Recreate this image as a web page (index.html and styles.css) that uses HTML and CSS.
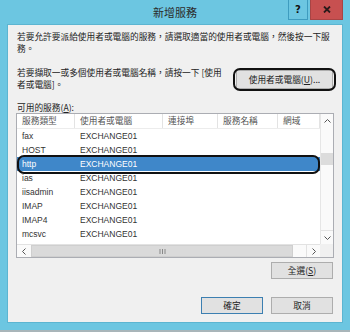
FILE: index.html
```html
<!DOCTYPE html>
<html lang="zh-Hant">
<head>
    <meta charset="UTF-8">
    <title>新增服務</title>
    <link rel="stylesheet" href="styles.css">
</head>
<body>

<div class="window">
    <div class="titlebar">
        <span></span>
        <span class="title">新增服務</span>
        <span class="caption-buttons">
            <span class="cap help">?</span>
            <span class="cap close">
                <svg width="8" height="7" viewBox="0 0 8 7"><path d="M1 0.5 L7 6.5 M7 0.5 L1 6.5" stroke="#2a1a1a" stroke-width="1.8"/></svg>
            </span>
        </span>
    </div>

    <div class="client">
        <p class="intro">若要允許要派給使用者或電腦的服務，請選取適當的使用者或電腦，然後按一下服務。</p>

        <div class="pick-row">
            <p class="pick-text">若要擷取一或多個使用者或電腦名稱，請按一下 [使用者或電腦]。</p>
            <button class="btn btn-users">使用者或電腦(<u>U</u>)...</button>
        </div>

        <div class="label">可用的服務(<u>A</u>):</div>

        <div class="listview">
            <div class="lv-header">
                <span>服務類型</span>
                <span>使用者或電腦</span>
                <span>連接埠</span>
                <span>服務名稱</span>
                <span>網域</span>
            </div>
            <div class="lv-rows">
                <div class="row"><span>fax</span><span>EXCHANGE01</span><span></span><span></span><span></span></div>
                <div class="row"><span>HOST</span><span>EXCHANGE01</span><span></span><span></span><span></span></div>
                <div class="row selected"><span>http</span><span>EXCHANGE01</span><span></span><span></span><span></span></div>
                <div class="row"><span>ias</span><span>EXCHANGE01</span><span></span><span></span><span></span></div>
                <div class="row"><span>iisadmin</span><span>EXCHANGE01</span><span></span><span></span><span></span></div>
                <div class="row"><span>IMAP</span><span>EXCHANGE01</span><span></span><span></span><span></span></div>
                <div class="row"><span>IMAP4</span><span>EXCHANGE01</span><span></span><span></span><span></span></div>
                <div class="row"><span>mcsvc</span><span>EXCHANGE01</span><span></span><span></span><span></span></div>
            </div>
            <div class="vscroll">
                <span class="arrow">
                    <svg width="7" height="4" viewBox="0 0 7 4"><path d="M0.5 3.5 L3.5 0.5 L6.5 3.5" fill="none" stroke="#555" stroke-width="1"/></svg>
                </span>
                <span class="v-gap"></span>
                <span class="v-thumb"></span>
                <span class="v-track"></span>
                <span class="arrow">
                    <svg width="7" height="4" viewBox="0 0 7 4"><path d="M0.5 0.5 L3.5 3.5 L6.5 0.5" fill="none" stroke="#555" stroke-width="1"/></svg>
                </span>
            </div>
            <div class="hscroll">
                <span class="arrow h-arrow">
                    <svg width="4" height="7" viewBox="0 0 4 7"><path d="M3.5 0.5 L0.5 3.5 L3.5 6.5" fill="none" stroke="#555" stroke-width="1"/></svg>
                </span>
                <span class="h-thumb">
                    <svg width="7" height="5" viewBox="0 0 7 5"><path d="M1 0 V5 M3.5 0 V5 M6 0 V5" stroke="#888" stroke-width="1"/></svg>
                </span>
                <span class="h-track"></span>
                <span class="arrow h-arrow">
                    <svg width="4" height="7" viewBox="0 0 4 7"><path d="M0.5 0.5 L3.5 3.5 L0.5 6.5" fill="none" stroke="#555" stroke-width="1"/></svg>
                </span>
            </div>
            <div class="corner"></div>
        </div>

        <div class="select-all-row">
            <button class="btn btn-small">全選(<u>S</u>)</button>
        </div>

        <div class="dialog-buttons">
            <button class="btn btn-small btn-default">確定</button>
            <button class="btn btn-small">取消</button>
        </div>
    </div>
</div>

</body>
</html>
```

FILE: styles.css
```css
body {
    margin: 0;
    background: #a9b5b9;
    font-family: "Noto Sans CJK TC", sans-serif;
}
p {
    margin: 0;
}
.window {
    width: 350px;
    height: 330px;
    box-sizing: border-box;
    background: #6cc6e1;
    padding: 0 7px 7px;
    display: flex;
    flex-direction: column;
}

/* title bar */
.titlebar {
    height: 24px;
    flex: none;
    display: grid;
    grid-template-columns: 1fr auto 1fr;
}
.title {
    font-size: 11px;
    line-height: 22px;
    padding-top: 1px;
    color: #2b2b2b;
}
.caption-buttons {
    justify-self: end;
    display: flex;
    gap: 2px;
    height: 20px;
}
.cap {
    display: flex;
    align-items: center;
    justify-content: center;
    box-sizing: border-box;
    height: 20px;
}
.help {
    width: 20px;
    border: 1px solid #3e9cbf;
    border-top: 0;
    font-family: "DejaVu Sans", sans-serif;
    font-weight: bold;
    font-size: 10px;
    color: #111;
}
.close {
    width: 33px;
    background: #c75050;
    border: 1px solid #a84444;
    border-top: 0;
}

/* dialog body */
.client {
    flex: 1;
    box-sizing: border-box;
    background: #f0f0f0;
    border: 1px solid #5cb5d1;
    padding: 0 8px;
    font-size: 8.7px;
    color: #222;
}
.intro {
    margin: 6px 0 0 1px;
    width: 318px;
    line-height: 12px;
}
.pick-row {
    display: flex;
    margin-top: 12px;
}
.pick-text {
    margin-left: 1px;
    width: 209px;
    line-height: 12px;
}
.btn {
    font: inherit;
    color: #222;
    background: #e1e1e1;
    border: 1px solid #adadad;
    padding: 0;
    box-sizing: border-box;
}
.btn-users {
    margin: 3px 1px 0 auto;
    width: 97px;
    height: 19px;
    position: relative;
}
.btn-users::after {
    content: "";
    position: absolute;
    inset: -3px -4px;
    border: 2px solid #111;
    border-radius: 7px;
}
.label {
    margin: 11px 0 0 1px;
    line-height: 11px;
}

/* list view */
.listview {
    display: grid;
    grid-template-columns: 303px 13px;
    grid-template-rows: 15px 115px 13px;
    border: 1px solid #abadb3;
    background: #fff;
}
.lv-header, .row {
    display: grid;
    grid-template-columns: 58px 88px 55px 60px 42px;
}
.lv-header {
    grid-column: 1;
    grid-row: 1;
    box-sizing: border-box;
    border-bottom: 1px solid #ececec;
    color: #555;
}
.lv-header span {
    padding-left: 5px;
    line-height: 14px;
    border-right: 1px solid #e3e3e3;
}
.lv-rows {
    grid-column: 1;
    grid-row: 2;
    overflow: hidden;
}
.row {
    height: 14px;
    line-height: 14px;
    position: relative;
}
.row span {
    padding-left: 5px;
    font-family: "Liberation Sans", "Noto Sans CJK TC", sans-serif;
    font-size: 8.5px;
    color: #333;
    white-space: nowrap;
}
.row.selected {
    background: #3f87c9;
}
.row.selected span {
    color: #fff;
}
.row.selected::after {
    content: "";
    position: absolute;
    inset: -2px 0 -3px 0;
    border: 2px solid #111;
    border-radius: 7px;
}

/* scrollbars */
.vscroll {
    grid-column: 2;
    grid-row: 1 / 3;
    display: flex;
    flex-direction: column;
    border-left: 1px solid #e6e6e6;
    background: #fafafa;
}
.arrow {
    display: flex;
    align-items: center;
    justify-content: center;
    height: 14px;
    flex: none;
}
.vscroll .arrow:last-child {
    border-top: 1px solid #e2e2e2;
    height: 13px;
}
.v-gap {
    height: 25px;
    flex: none;
}
.v-thumb {
    height: 12px;
    flex: none;
    background: #dcdcdc;
}
.v-track {
    flex: 1;
}
.hscroll {
    grid-column: 1;
    grid-row: 3;
    display: flex;
    border-top: 1px solid #e2e2e2;
    background: #fafafa;
}
.h-arrow {
    width: 13px;
    height: auto;
}
.h-arrow:first-child {
    width: 14px;
}
.h-thumb {
    width: 263px;
    box-sizing: border-box;
    background: #dadada;
    border: 1px solid #cfcfcf;
    display: flex;
    align-items: center;
    justify-content: center;
}
.h-track {
    width: 13px;
    border-right: 1px solid #e2e2e2;
}
.corner {
    grid-column: 2;
    grid-row: 3;
    background: #f0f0f0;
}

/* bottom buttons */
.select-all-row {
    display: flex;
    justify-content: flex-end;
    margin-top: 4px;
    padding-right: 1px;
}
.btn-small {
    width: 62px;
    height: 17px;
}
.dialog-buttons {
    display: flex;
    justify-content: flex-end;
    gap: 8px;
    margin-top: 18px;
    padding-right: 1px;
}
.btn-default {
    border-color: #3c7fb1;
}
```
